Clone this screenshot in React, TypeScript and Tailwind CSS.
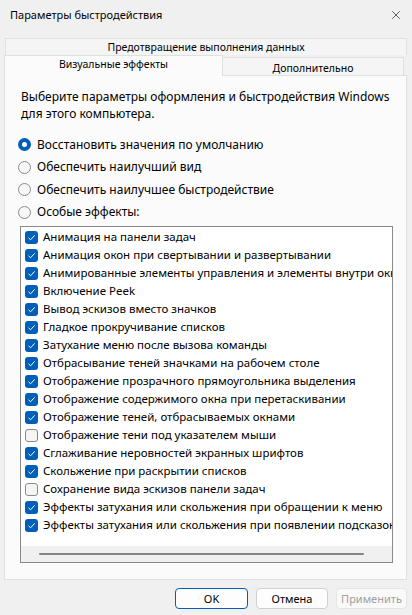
import { X } from 'lucide-react';

const effects: [string, boolean][] = [
  ['Анимация на панели задач', true],
  ['Анимация окон при свертывании и развертывании', true],
  ['Анимированные элементы управления и элементы внутри окна', true],
  ['Включение Peek', true],
  ['Вывод эскизов вместо значков', true],
  ['Гладкое прокручивание списков', true],
  ['Затухание меню после вызова команды', true],
  ['Отбрасывание теней значками на рабочем столе', true],
  ['Отображение прозрачного прямоугольника выделения', true],
  ['Отображение содержимого окна при перетаскивании', true],
  ['Отображение теней, отбрасываемых окнами', true],
  ['Отображение тени под указателем мыши', false],
  ['Сглаживание неровностей экранных шрифтов', true],
  ['Скольжение при раскрытии списков', true],
  ['Сохранение вида эскизов панели задач', false],
  ['Эффекты затухания или скольжения при обращении к меню', true],
  ['Эффекты затухания или скольжения при появлении подсказок', true],
];

const radios = [
  ['Восстановить значения по умолчанию', true],
  ['Обеспечить наилучший вид', false],
  ['Обеспечить наилучшее быстродействие', false],
  ['Особые эффекты:', false],
] as const;

function Radio({ on }: { on: boolean }) {
  if (on)
    return (
      <span className="w-[13px] h-[13px] rounded-full bg-[#005fb8] flex items-center justify-center shrink-0">
        <span className="w-[5px] h-[5px] rounded-full bg-white" />
      </span>
    );
  return <span className="w-[13px] h-[13px] rounded-full border border-[#8a8a8a] bg-[#f7f7f7] shrink-0" />;
}

function Check({ on }: { on: boolean }) {
  if (on)
    return (
      <span className="w-[13px] h-[13px] rounded-[3px] bg-[#005fb8] flex items-center justify-center shrink-0">
        <svg width="9" height="9" viewBox="0 0 9 9" fill="none">
          <path d="M1.5 4.8 L3.6 6.8 L7.6 2.4" stroke="white" strokeWidth="1" />
        </svg>
      </span>
    );
  return <span className="w-[13px] h-[13px] rounded-[3px] border border-[#8a8a8a] bg-[#f5f5f5] shrink-0" />;
}

export default function App() {
  return (
    <div
      className="w-[412px] h-[615px] bg-[#f0f0f0] flex flex-col text-[12px] text-black overflow-hidden"
      style={{ fontFamily: '"Noto Sans", "Open Sans", sans-serif' }}
    >
      <div className="h-[30px] flex items-center justify-between pl-[10px] pr-[9px]">
        <span className="text-[11px]">Параметры быстродействия</span>
        <X className="w-[14px] h-[14px] text-[#222]" strokeWidth={1.2} />
      </div>

      <div className="px-[4px] pt-[8px] flex flex-col text-[10.5px]">
        <div className="ml-[1px] mr-[1px] h-[17px] border border-b-0 border-[#e0e0e0] bg-[#f5f5f5] flex items-center justify-center pt-[1px] leading-none">
          Предотвращение выполнения данных
        </div>
        <div className="flex items-end h-[20px]">
          <div className="w-[219px] h-[21px] bg-[#fbfbfb] border border-b-0 border-[#e0e0e0] flex items-start justify-center pt-[3px] leading-none -mb-[1px] relative z-10">
            Визуальные эффекты
          </div>
          <div className="w-[181px] h-[18px] border border-l-0 border-b-0 border-[#e0e0e0] bg-[#f5f5f5] flex items-center justify-center pt-[3px] leading-none">
            Дополнительно
          </div>
        </div>
        <div className="h-[505px] w-[403px] bg-[#fbfbfb] border border-[#e0e0e0] pt-[12px] pl-[16px] flex flex-col text-[12px]">
          <p className="leading-[17px]">
            Выберите параметры оформления и быстродействия Windows
            <br />
            для этого компьютера.
          </p>
          <div className="mt-[14px] flex flex-col gap-[5px]">
            {radios.map(([label, on]) => (
              <div key={label} className="flex items-center gap-[6px] h-[17.5px] -ml-[3px]">
                <Radio on={on} />
                <span>{label}</span>
              </div>
            ))}
          </div>
          <div className="mt-[5px] -ml-[1px] w-[373px] h-[337px] border border-[#8a8a8a] bg-white flex flex-col text-[11.5px]">
            <div className="flex-1 pt-[1px] overflow-hidden">
              {effects.map(([label, on]) => (
                <div key={label} className="h-[18px] flex items-center gap-[5px] pl-[4px] whitespace-nowrap">
                  <Check on={on} />
                  <span>{label}</span>
                </div>
              ))}
            </div>
            <div className="h-[16px] bg-[#f0f0f0] flex items-center pl-[18px]">
              <div className="w-[325px] h-[2px] bg-[#858585] rounded-full" />
            </div>
          </div>
        </div>
      </div>

      <div className="flex justify-end gap-[8px] pr-[5px] pt-[8px] text-[11px]">
        <button className="w-[73px] h-[21px] rounded-[4px] border border-[#005fb8] bg-[#fdfdfd] leading-none">OK</button>
        <button className="w-[72px] h-[21px] rounded-[4px] border border-[#d0d0d0] bg-[#fdfdfd] leading-none">Отмена</button>
        <button className="w-[71px] h-[21px] rounded-[4px] border border-[#e5e5e5] bg-[#f9f9f9] text-[#a0a0a0] leading-none">Применить</button>
      </div>
    </div>
  );
}
